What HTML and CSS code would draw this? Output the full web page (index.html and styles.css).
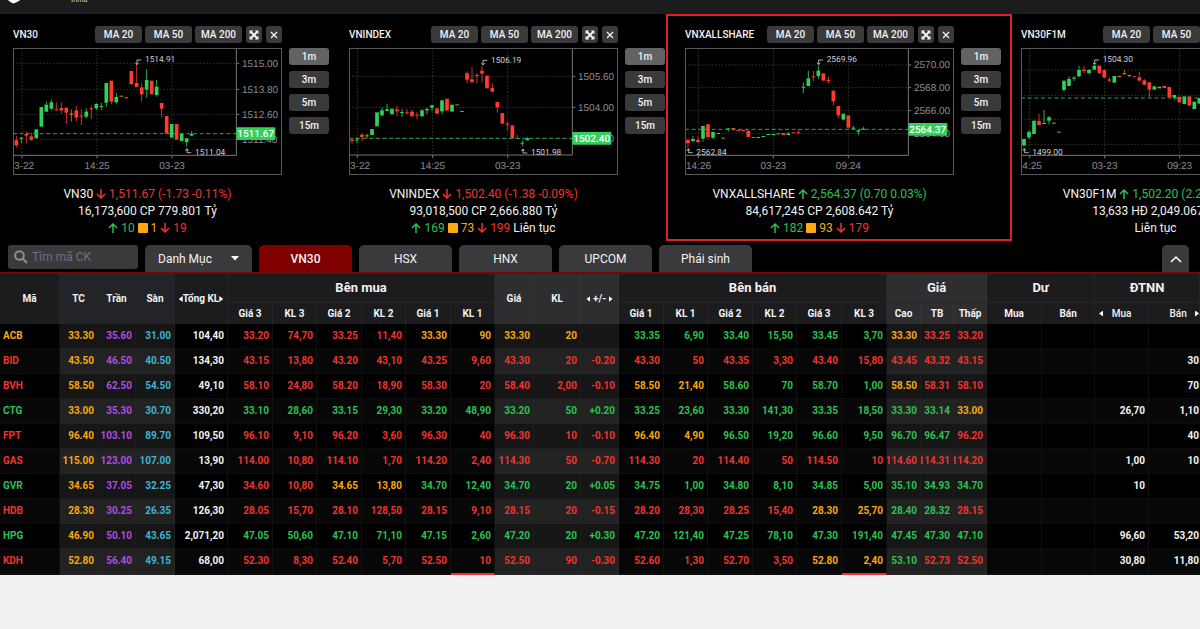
FILE: index.html
```
<!DOCTYPE html>
<html lang="vi">
<head>
<meta charset="utf-8">
<title>Bảng giá VN30</title>
<link rel="stylesheet" href="styles.css">
</head>
<body>
<div class="board">
  <header class="topbar">
    <svg class="logo" viewBox="0 0 12 4" aria-hidden="true"><path d="M0 0H12L11 1 7 3Q5.500 3.500 4 3L1 1Z" fill="#fff"/></svg>
    <span class="brand">trima</span>
  </header>

  <main>
    <section class="charts" id="charts"></section>

    <nav class="tabs">
      <label class="search">
        <svg viewBox="0 0 14 14" aria-hidden="true"><circle cx="5.500" cy="5.500" r="4.300"/><path d="M8.700 8.700L13 13"/></svg>
        <input type="text" placeholder="Tìm mã CK" aria-label="Tìm mã CK">
      </label>
      <button class="tab tab-menu">Danh Mục
        <svg viewBox="0 0 8 5" aria-hidden="true"><path d="M0 0H8L4 4.500Z"/></svg>
      </button>
      <button class="tab tab-active">VN30</button>
      <button class="tab">HSX</button>
      <button class="tab">HNX</button>
      <button class="tab">UPCOM</button>
      <button class="tab">Phái sinh</button>
      <button class="tab tab-up" aria-label="Thu gọn">
        <svg viewBox="0 0 12 8" aria-hidden="true"><path d="M1 7L6 2L11 7"/></svg>
      </button>
    </nav>

    <table class="quotes">
      <colgroup>
        <col style="width:60px"><col style="width:38px"><col style="width:38px"><col style="width:39px"><col style="width:53px">
        <col style="width:45px"><col style="width:44px"><col style="width:45px"><col style="width:44px"><col style="width:45px"><col style="width:44px">
        <col style="width:39px"><col style="width:47px"><col style="width:38px">
        <col style="width:45px"><col style="width:44px"><col style="width:45px"><col style="width:44px"><col style="width:45px"><col style="width:45px">
        <col style="width:34px"><col style="width:33px"><col style="width:33px">
        <col style="width:55px"><col style="width:53px"><col style="width:54px"><col style="width:51px">
      </colgroup>
      <thead>
        <tr class="head-top">
          <th rowspan="2">Mã</th>
          <th rowspan="2" class="ref">TC</th><th rowspan="2" class="ref">Trần</th><th rowspan="2" class="ref">Sàn</th>
          <th rowspan="2"><i class="left"></i>Tổng KL<i class="right"></i></th>
          <th colspan="6" class="group">Bên mua</th>
          <th rowspan="2" class="lit">Giá</th><th rowspan="2" class="lit">KL</th>
          <th rowspan="2" class="lit"><i class="left"></i> +/- <i class="right"></i></th>
          <th colspan="6" class="group">Bên bán</th>
          <th colspan="3" class="group lit">Giá</th>
          <th colspan="2" class="group">Dư</th>
          <th colspan="2" class="group">ĐTNN</th>
        </tr>
        <tr class="head-sub">
          <th>Giá 3</th><th>KL 3</th><th>Giá 2</th><th>KL 2</th><th>Giá 1</th><th>KL 1</th>
          <th>Giá 1</th><th>KL 1</th><th>Giá 2</th><th>KL 2</th><th>Giá 3</th><th>KL 3</th>
          <th class="lit">Cao</th><th class="lit">TB</th><th class="lit">Thấp</th>
          <th>Mua</th><th>Bán</th>
          <th class="thin"><span class="ends"><i class="left"></i><b>Mua</b><i></i></span></th>
          <th class="thin"><span class="ends ends-last"><i></i><b>Bán</b><i class="right"></i></span></th>
        </tr>
      </thead>
      <tbody id="rows"></tbody>
    </table>
  </main>
</div>
<script src="board.js"></script>
</body>
</html>
```
FILE: styles.css
```
* { box-sizing: border-box; }

body {
  margin: 0;
  background: #f1f1f1;
  color: #f2f2f2;
  font-family: Roboto, "Noto Sans", sans-serif;
  font-size: 12px;
}

button, input { font: inherit; color: inherit; border: 0; padding: 0; margin: 0; }

.board { background: #000; overflow: hidden; }

.topbar {
  display: flex;
  align-items: flex-start;
  gap: 51px;
  height: 14px;
  padding-left: 8px;
  background: #1c1c1e;
  overflow: hidden;
}
.logo { width: 12px; height: 4px; }
.brand { font-size: 7px; line-height: 8px; margin-top: -4px; color: #ddd; }

/* chart panels */
.charts { display: flex; height: 228px; }
.panel { position: relative; flex: 0 0 28%; padding: 12px 0 0 13px; }
.panel-head { display: flex; align-items: center; gap: 3px; width: 269px; height: 17px; }
.panel-head h2 { flex: 1; margin: 0; font-size: 10px; line-height: 17px; font-weight: 500; }
.chip {
  height: 17px;
  width: 47px;
  border-radius: 3px;
  background: #3a3a3c;
  font-size: 10px;
  line-height: 17px;
  font-weight: 500;
  text-align: center;
}
.chip-icon { display: grid; place-items: center; width: 16px; margin-left: 1px; }
.chip-icon svg { width: 10px; height: 10px; fill: #f2f2f2; stroke: #f2f2f2; }
.panel-body { display: flex; gap: 7px; margin-top: 5px; }
.plot { width: 269px; height: 127px; flex: none; display: block; }
.plot text { font-family: "Liberation Sans", Arial, sans-serif; font-size: 30px; fill: #8e8e93; text-rendering: geometricPrecision; }
.plot .note { font-family: Roboto, sans-serif; font-size: 25px; fill: #d0d0d4; }
.plot .tag { fill: #fff; font-weight: 500; font-family: Roboto, sans-serif; font-size: 30px; }
.spans { display: flex; flex-direction: column; gap: 6px; }
.spans .chip { width: 40px; }
.spans .chip-on { background: #636366; }

.summary { width: 269px; margin-top: 11px; font-size: 12px; line-height: 17px; text-align: center; white-space: nowrap; }
.summary p { margin: 0; }
.summary svg { width: 10px; height: 10px; vertical-align: -1px; fill: none; stroke: currentColor; stroke-width: 1.5; }
.summary .flat { display: inline-block; width: 10px; height: 10px; border-radius: 1px; background: #ffa80f; vertical-align: -1px; }

.marker { position: absolute; inset: 0 -4px 1px -6px; border: 2px solid #e01f26; pointer-events: none; }

/* filter row */
.tabs { display: flex; gap: 7px; height: 32px; padding: 3px 11px 0 8px; border-bottom: 2px solid #7a0406; }
.search { display: flex; align-items: center; gap: 4px; width: 130px; height: 24px; padding: 0 6px; border-radius: 3px; background: #3a3a3c; }
.search svg { flex: none; width: 14px; height: 14px; fill: none; stroke: #8e8e93; stroke-width: 2; }
.search input { width: 100%; background: none; outline: 0; }
.search input::placeholder { color: #6b7080; opacity: 1; }
.tab { width: 93px; height: 27px; border-radius: 5px 5px 0 0; background: #3a3a3c; }
.tab-active { background: #800000; font-weight: 500; }
.tab-menu { display: flex; align-items: center; justify-content: space-between; width: 107px; padding: 0 13px; }
.tab-menu svg { width: 8px; height: 5px; fill: #fff; }
.tab-up { display: grid; place-items: center; width: 27px; margin-left: auto; }
.tab-up svg { width: 12px; height: 8px; fill: none; stroke: #fff; stroke-width: 1.5; }

/* quote table */
.quotes { width: 100%; table-layout: fixed; border-collapse: separate; border-spacing: 0; font-size: 10px; }
th { padding: 0; background: #1c1c1e; border-right: 1px solid #252527; font-size: 10px; font-weight: 700; line-height: 12px; white-space: nowrap; }
.head-top { height: 28px; }
.head-sub { height: 22px; }
.head-sub th { border-top: 1px solid #252527; }
.group { font-size: 13px; line-height: 16px; }
.ref { background: #222427; }
.lit { background: #2e2e30; border-color: #353537; }
.thin { font-weight: 500; }
.thin b { font-weight: 500; }
.ends { display: flex; align-items: center; justify-content: space-between; padding: 0 4px; }
.ends-last { padding: 0 0 0 8px; }
th i { display: inline-block; width: 4px; height: 6px; }
th .left { background: #fff; clip-path: polygon(100% 0, 100% 100%, 0 50%); }
th .right { background: #fff; clip-path: polygon(0 0, 0 100%, 100% 50%); }

td {
  height: 25px;
  padding: 0 3px 0 0;
  border-right: 1px solid #111;
  border-bottom: 1px solid #0d0d0d;
  text-align: right;
  font-weight: 700;
  line-height: 12px;
  overflow: hidden;
}
td:first-child { padding-left: 3px; text-align: left; }
td:last-child { padding-right: 1px; border-right: 0; }
tbody tr:nth-child(even) { background: #070707; }
tbody .shade { background: #161616; border-color: #1c1c1c; }
tbody tr:nth-child(even) .shade { background: #222; border-color: #262626; }
tbody tr:last-child td { height: 26px; border-bottom: 2px solid #0d0d0d; }
tbody tr:last-child .hot { border-bottom-color: #e8362c; }
.clip { display: flex; justify-content: flex-end; }

.r { color: #ee352d; }
.g { color: #2dc052; }
.y { color: #f7a814; }
.p { color: #ae4de0; }
.c { color: #3bb5d0; }
.w { color: #f2f2f2; }
```
FILE: board.js
```
// Candles: [x, body top, body bottom, colour, wick top, wick bottom]
const panels = [
  { name: "VN30", box: [40, 144], right: 710, bottom: 466, price: 401, v: [67, 292, 517],
    h: [[190, "1515.00"], [268, "1513.80"], [343, "1512.60"], [418, "1511.40"]],
    x: [[43, "3-22", "start"], [292, "14:25"], [517, "03-23"]],
    tag: "1511.67", high: [411, 186, "1514.91"], low: [562, 446, "1511.04"],
    dir: "down", quote: "1,511.67 (-1.73 -0.11%)", volume: "16,173,600 CP 779.801 Tỷ", count: [10, 1, 19], state: "",
    candles: [[50,421,436,"r",408,442],[65,413,416,"g",411,430],[80,402,407,"r",395,430],[95,409,419,"r",398,423],[110,388,415,"g"],[125,321,380,"g"],[140,314,335,"g",304,335],[155,307,326,"g",299,329],[170,328,331,"r",307,331],[185,324,331,"r",307,340],[200,323,338,"r",323,372],[215,341,344,"y",328,365],[230,331,353,"r",318,364],[245,347,350,"r",328,375],[260,335,350,"g",325,355],[275,325,328,"r",317,357],[290,312,325,"g",310,330],[305,318,320,"g",308,331],[320,249,308,"g",249,320],[335,242,305,"r",242,313],[350,291,307,"g",279,311],[365,287,289,"y"],[380,292,295,"y"],[395,213,252,"r",213,255],[411,249,261,"r",190,261],[426,262,283,"r",250,305],[441,240,269,"g",207,293],[456,242,283,"r"],[471,260,285,"g",240,290],[486,309,326,"r",309,353],[501,348,401,"r"],[516,372,413,"g"],[531,372,419,"r"],[546,401,423,"g"],[561,415,426,"g",415,440],[576,402,407,"g",393,408]] },
  { name: "VNINDEX", box: [43, 85], right: 713, bottom: 406, price: 356, v: [68, 294, 519],
    h: [[170, "1505.60"], [263, "1504.00"], [356, "1502.40"]],
    x: [[46, "3-22", "start"], [294, "14:25"], [519, "03-23"]],
    tag: "1502.40", high: [444, 128, "1506.19"], low: [565, 388, "1501.98"],
    dir: "down", quote: "1,502.40 (-1.38 -0.09%)", volume: "93,018,500 CP 2,666.880 Tỷ", count: [169, 73, 199], state: "Liên tục",
    candles: [[52,360,364,"r",356,372],[67,359,362,"g",352,371],[82,345,352,"r",341,364],[97,347,350,"y",342,356],[112,328,346,"g"],[127,278,320,"g"],[142,272,287,"g",263,290],[157,269,274,"g",252,274],[172,267,284,"g"],[187,269,275,"r",258,290],[202,277,279,"g",268,293],[217,278,280,"r",268,285],[232,276,290,"r",270,290],[247,285,288,"r",276,299],[262,272,290,"g",268,290],[277,268,272,"g",264,284],[292,257,264,"g",255,275],[307,266,282,"r"],[322,242,275,"g",242,284],[337,237,273,"r"],[352,255,276,"g"],[367,254,256,"y"],[382,274,277,"y"],[397,161,180,"r",155,191],[412,179,188,"r",142,188],[427,166,168,"r",160,191],[442,153,162,"r",138,188],[457,168,206,"r"],[473,205,216,"r",190,216],[488,247,263,"r",247,279],[503,280,312,"r"],[518,312,315,"r",306,333],[533,317,355,"r"],[548,355,358,"r",346,358],[563,369,372,"g",362,380],[578,356,362,"g",352,362]] },
  { name: "VNXALLSHARE", box: [60, 144], right: 730, bottom: 466, price: 388, v: [100, 325, 550], marked: true,
    h: [[195, "2570.00"], [263, "2568.00"], [332, "2566.00"], [400, "2564.00"]],
    x: [[63, "14:26", "start"], [325, "03-23"], [550, "09:24"]],
    tag: "2564.37", high: [460, 186, "2569.96"], low: [70, 446, "2562.84"],
    dir: "up", quote: "2,564.37 (0.70 0.03%)", volume: "84,617,245 CP 2,608.642 Tỷ", count: [182, 93, 179], state: "",
    candles: [[69,420,430,"r",415,441],[84,417,423,"g",408,427],[99,420,426,"r",409,431],[114,378,416,"g",378,425],[129,373,411,"r",373,418],[144,396,413,"g",396,417],[160,399,401,"y"],[174,413,416,"g"],[190,385,388,"g",385,395],[205,384,389,"r",384,392],[220,390,392,"r"],[235,390,392,"r"],[250,392,411,"r"],[265,411,413,"r"],[280,411,413,"g"],[295,408,411,"g"],[310,402,404,"g"],[325,402,404,"g"],[340,400,402,"g"],[355,399,405,"r"],[370,401,405,"g",396,405],[385,397,400,"r"],[400,397,400,"r",389,400],[415,260,263,"g",248,280],[430,235,258,"g",212,258],[445,229,232,"r",213,243],[460,212,228,"g",197,237],[475,220,242,"r"],[490,239,243,"r",230,250],[505,272,304,"r",272,316],[520,318,346,"r",318,354],[535,341,359,"g"],[550,346,383,"r"],[565,383,385,"g",377,389],[580,391,395,"g",390,406],[595,386,388,"g",380,388]] },
  { name: "VN30F1M", box: [47, 144], right: 717, bottom: 466, price: 294, v: [73, 298, 523],
    h: [[210, "1504.00"], [286, "1502.40"], [358, "1501.20"], [433, "1499.60"]],
    x: [[51, "4:25", "start"], [298, "03-23"], [523, "09:23"]],
    tag: "1502.20", high: [267, 186, "1504.30"], low: [57, 446, "1499.00"],
    dir: "up", quote: "1,502.20 (2.20 0.15%)", volume: "13,633 HĐ 2,049.067 Tỷ", state: "Liên tục",
    candles: [[56,417,436,"g",417,440],[71,396,412,"g",390,418],[86,362,402,"g"],[101,363,375,"r",341,375],[116,369,371,"g",330,371],[131,352,362,"g",348,373],[146,368,371,"y"],[161,395,398,"y"],[176,242,270,"g",242,275],[191,237,258,"g",229,258],[206,233,236,"g",228,243],[221,210,229,"g",197,232],[236,209,213,"r",199,219],[251,209,220,"g"],[267,197,209,"g"],[282,197,220,"r"],[297,210,233,"r"],[312,238,242,"r",232,246],[327,228,248,"g"],[342,228,231,"y"],[357,220,223,"y",210,223],[372,225,228,"y",225,232],[387,229,232,"r"],[402,232,242,"r",215,242],[417,241,254,"r",237,254],[432,247,269,"r",247,293],[447,259,269,"g"],[462,260,265,"g"],[477,258,264,"r"],[492,261,292,"r"],[507,285,293,"g",285,300],[522,290,307,"r"],[537,289,312,"g"],[552,289,317,"r"],[567,305,327,"g"],[582,294,311,"g"]] }
];

const tones = { r: "#ff3b30", g: "#30d158", y: "#d88a08" };

function plot(p) {
  const [x0, y0] = p.box;
  const bits = [];
  for (const [y] of p.h) bits.push(`<path d="M${x0} ${y}H${p.right}" stroke="#48484a" stroke-width="2" stroke-dasharray="5 5"/>`);
  for (const x of p.v) bits.push(`<path d="M${x} ${y0}V${p.bottom}" stroke="#48484a" stroke-width="2" stroke-dasharray="5 5"/>`);
  for (const [x, t, b, tone, wt, wb] of p.candles) {
    if (wt !== undefined) bits.push(`<path d="M${x} ${wt}V${wb}" stroke="${tones[tone]}" stroke-width="2.500"/>`);
    bits.push(`<rect x="${x - 5.5}" y="${t}" width="11" height="${Math.max(3, b - t)}" fill="${tones[tone]}"/>`);
  }
  bits.push(`<path d="M${x0} ${p.price}H${p.right}" stroke="#27a844" stroke-width="3" stroke-dasharray="12 8"/>`);
  bits.push(`<path d="M${x0} ${p.bottom}H${p.right}M${p.right} ${y0}V${p.bottom}" stroke="#77777b" stroke-width="3" fill="none"/>`);
  for (const [y, label] of p.h) bits.push(`<path d="M${p.right} ${y}h9" stroke="#77777b" stroke-width="3"/><text x="${p.right + 17}" y="${y + 10}">${label}</text>`);
  for (const [x, label, side] of p.x) {
    bits.push(`<text x="${x}" y="${y0 + 364}" text-anchor="${side || "middle"}">${label}</text>`);
  }
  for (const x of p.v) bits.push(`<path d="M${x} ${p.bottom}v9" stroke="#77777b" stroke-width="3"/>`);
  const [hx, hy, ht] = p.high;
  bits.push(`<path d="M${hx + 14} ${hy - 6}H${hx + 1}V${hy + 6}M${hx - 4} ${hy + 2}L${hx + 1} ${hy + 8}L${hx + 6} ${hy + 2}" stroke="#d0d0d4" stroke-width="2.500" fill="none"/><text class="note" x="${hx + 25}" y="${hy + 1}">${ht}</text>`);
  const [lx, ly, lt] = p.low;
  bits.push(`<path d="M${lx + 13} ${ly + 12}H${lx}V${ly}M${lx - 5} ${ly + 6}L${lx} ${ly}L${lx + 5} ${ly + 6}" stroke="#d0d0d4" stroke-width="2.500" fill="none"/><text class="note" x="${lx + 24}" y="${ly + 19}">${lt}</text>`);
  bits.push(`<rect x="${p.right}" y="${p.price - 19}" width="117" height="38" rx="3" fill="#30d158"/><text class="tag" x="${p.right + 58}" y="${p.price + 10}" text-anchor="middle">${p.tag}</text>`);
  bits.push(`<rect x="${x0 + 1.5}" y="${y0 + 1.5}" width="804" height="378" fill="none" stroke="#58585b" stroke-width="3"/>`);
  return `<svg class="plot" viewBox="${x0} ${y0} 807 381" role="img" aria-label="${p.name}">${bits.join("")}</svg>`;
}

const arrow = dir => `<svg class="${dir === "up" ? "g" : "r"}" viewBox="0 0 10 10" aria-hidden="true"><path d="${dir === "up" ? "M5 10V1M1 5L5 1L9 5" : "M5 0V9M1 5L5 9L9 5"}"/></svg>`;

document.getElementById("charts").innerHTML = panels.map(p => {
  const tone = p.dir === "up" ? "g" : "r";
  const counts = p.count
    ? `${arrow("up")} <span class="g">${p.count[0]}</span> <span class="flat"></span> <span class="y">${p.count[1]}</span> ${arrow("down")} <span class="r">${p.count[2]}</span> `
    : "";
  return `<article class="panel">
    <div class="panel-head"><h2>${p.name}</h2>
      <button class="chip">MA 20</button><button class="chip">MA 50</button><button class="chip">MA 200</button>
      <button class="chip chip-icon" aria-label="Phóng to"><svg viewBox="0 0 10 10"><path stroke="none" d="M.5 .5H4.300L.5 4.300ZM9.500 .5V4.300L5.700 .5ZM.5 9.500V5.700L4.300 9.500ZM9.500 9.500H5.700L9.500 5.700Z"/><path d="M2 2L8 8M8 2L2 8" stroke-width="2"/></svg></button>
      <button class="chip chip-icon" aria-label="Đóng"><svg viewBox="0 0 10 10"><path d="M2 2L8 8M8 2L2 8" stroke-width="1.300"/></svg></button>
    </div>
    <div class="panel-body">${plot(p)}
      <div class="spans"><button class="chip chip-on">1m</button><button class="chip">3m</button><button class="chip">5m</button><button class="chip">15m</button></div>
    </div>
    <div class="summary"><p>${p.name} ${arrow(p.dir)} <span class="${tone}">${p.quote}</span></p><p>${p.volume}</p><p>${counts}${p.state}</p></div>
    ${p.marked ? '<div class="marker"></div>' : ""}
  </article>`;
}).join("");

// A leading letter sets the colour of a cell and of those after it; "-" alone is an empty cell.
const rows = `
yACB y33.30 p35.60 c31.00 w104,40 r33.20 74,70 33.25 11,40 y33.30 90 33.30 20 - g33.35 6,90 33.40 15,50 33.45 3,70 y33.30 r33.25 33.20 - - - -
rBID y43.50 p46.50 c40.50 w134,30 r43.15 13,80 43.20 43,10 43.25 9,60 43.30 20 -0.20 43.30 50 43.35 3,30 43.40 15,80 43.45 43.32 43.15 - - - w30
rBVH y58.50 p62.50 c54.50 w49,10 r58.10 24,80 58.20 18,90 58.30 20 58.40 2,00 -0.10 y58.50 21,40 g58.60 70 58.70 1,00 y58.50 r58.31 58.10 - - - w70
gCTG y33.00 p35.30 c30.70 w330,20 g33.10 28,60 33.15 29,30 33.20 48,90 33.20 50 +0.20 33.25 23,60 33.30 141,30 33.35 18,50 33.30 33.14 y33.00 - - w26,70 1,10
rFPT y96.40 p103.10 c89.70 w109,50 r96.10 9,10 96.20 3,60 96.30 40 96.30 10 -0.10 y96.40 4,90 g96.50 19,20 96.60 9,50 96.70 96.47 r96.20 - - - w40
rGAS y115.00 p123.00 c107.00 w13,90 r114.00 10,80 114.10 1,70 114.20 2,40 114.30 50 -0.70 114.30 20 114.40 50 114.50 10 114.60 114.31 114.20 - - w1,00 10
gGVR y34.65 p37.05 c32.25 w47,30 r34.60 10,80 y34.65 13,80 g34.70 12,40 34.70 20 +0.05 34.75 1,00 34.80 8,10 34.85 5,00 35.10 34.93 34.70 - - w10 -
rHDB y28.30 p30.25 c26.35 w126,30 r28.05 15,70 28.10 128,50 28.15 9,10 28.15 20 -0.15 28.20 28,30 28.25 15,40 y28.30 25,70 g28.40 28.32 r28.15 - - - -
gHPG y46.90 p50.10 c43.65 w2,071,20 g47.05 50,60 47.10 71,10 47.15 2,60 47.20 20 +0.30 47.20 121,40 47.25 78,10 47.30 191,40 47.45 47.30 47.10 - - w96,60 53,20
rKDH y52.80 p56.40 c49.15 w68,00 r52.30 8,30 52.40 5,70 52.50 10 52.50 90 -0.30 52.60 1,30 52.70 3,50 y52.80 2,40 g53.10 r52.73 52.50 - - w30,80 11,80`.trim().split("\n");

const shaded = new Set([1, 2, 3, 11, 12, 13, 20, 21, 22]);
const hot = new Set([10, 19]);

document.getElementById("rows").innerHTML = rows.map(line => {
  let tone = "w";
  return "<tr>" + line.split(" ").map((token, i) => {
    if (/^[rgypcw]/.test(token)) { tone = token[0]; token = token.slice(1); }
    const cls = [tone, shaded.has(i) ? "shade" : "", hot.has(i) ? "hot" : ""].filter(Boolean).join(" ");
    const value = token === "-" ? "" : token;
    return `<td class="${cls}">${i > 19 && value ? `<div class="clip">${value}</div>` : value}</td>`;
  }).join("") + "</tr>";
}).join("");
```
